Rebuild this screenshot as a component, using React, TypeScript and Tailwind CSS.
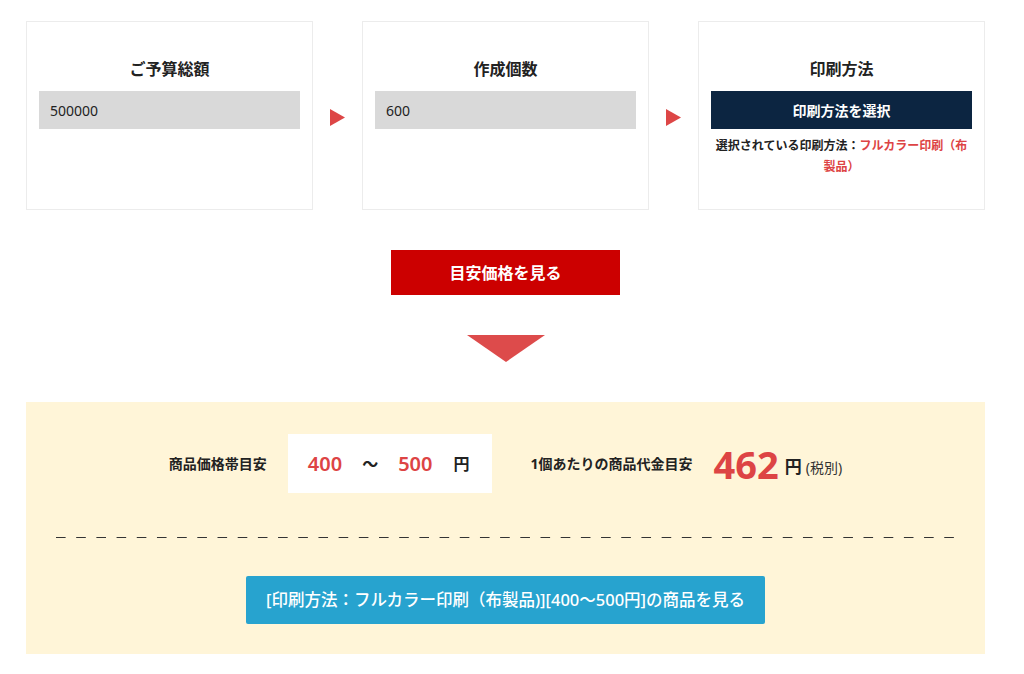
import React from "react"

const font = "font-['Noto_Sans','Noto_Sans_CJK_JP',sans-serif]"

const Arrow = () => {
  return (
    <div className="w-[49px] flex justify-center pt-[88px]">
      <svg width="15" height="17" viewBox="0 0 15 17">
        <polygon points="0,0 15,8.5 0,17" fill="#dd4646" />
      </svg>
    </div>
  )
}

const Card = ({ title, children }: { title: string; children: React.ReactNode }) => {
  return (
    <div className="w-[287px] h-[189px] border border-[#ececec] bg-white px-3 pt-[35px]">
      <h2 className="text-center text-[16px] font-bold leading-[24px] text-[#222] mb-[10px]">{title}</h2>
      {children}
    </div>
  )
}

export default function App() {
  return (
    <div className={`${font} w-[1024px] bg-white pl-[26px] pt-[21px] pb-[21px] text-[#222]`}>
      <div className="w-[959px]">
        <div className="flex">
          <Card title="ご予算総額">
            <div className="h-[38px] bg-[#d9d9d9] px-[11px] flex items-center text-[14px]">500000</div>
          </Card>
          <Arrow />
          <Card title="作成個数">
            <div className="h-[38px] bg-[#d9d9d9] px-[11px] flex items-center text-[14px]">600</div>
          </Card>
          <Arrow />
          <Card title="印刷方法">
            <button className="w-full h-[38px] bg-[#0c2541] text-white text-[14px] font-bold">印刷方法を選択</button>
            <p className="mt-[6px] text-center text-[12px] font-bold leading-[21px]">
              選択されている印刷方法：<span className="text-[#dd4444]">フルカラー印刷（布製品）</span>
            </p>
          </Card>
        </div>

        <div className="flex flex-col items-center pt-[40px]">
          <button className="w-[229px] h-[45px] bg-[#cc0000] text-white text-[16px] font-bold">目安価格を見る</button>
          <svg className="mt-[40px]" width="78" height="27" viewBox="0 0 78 27">
            <polygon points="0,0 78,0 39,27" fill="#dd4b4b" />
          </svg>
        </div>

        <div className="mt-[40px] bg-[#fff5d8] pt-[32px] pb-[30px] px-[30px]">
          <div className="flex items-center justify-center">
            <span className="text-[14px] font-bold mr-[21px]">商品価格帯目安</span>
            <div className="h-[59px] bg-white flex items-center pl-[20px] pr-[22px]">
              <span className="text-[20px] font-semibold text-[#dd4444]">400</span>
              <span className="text-[16px] font-bold mx-[20px]">〜</span>
              <span className="text-[20px] font-semibold text-[#dd4444]">500</span>
              <span className="text-[16px] font-bold ml-[21px]">円</span>
            </div>
            <span className="text-[14px] font-bold ml-[39px] mr-[21px]">1個あたりの商品代金目安</span>
            <span className="text-[38px] font-bold text-[#dd4444] leading-none">462</span>
            <span className="text-[17px] font-bold ml-[6px] mt-[6px]">円</span>
            <span className="text-[14px] text-[#333] ml-[4px] mt-[8px]">(税別)</span>
          </div>

          <div className="mt-[44px] h-px bg-[linear-gradient(to_right,#333_50%,transparent_50%)] bg-[length:20.2px_1px]" />

          <div className="flex justify-center mt-[38px]">
            <button className="h-[48px] w-[519px] bg-[#27a3cf] text-white text-[16.5px] font-medium rounded-[2px]">
              [印刷方法：フルカラー印刷（布製品)][400〜500円]の商品を見る
            </button>
          </div>
        </div>
      </div>
    </div>
  )
}
